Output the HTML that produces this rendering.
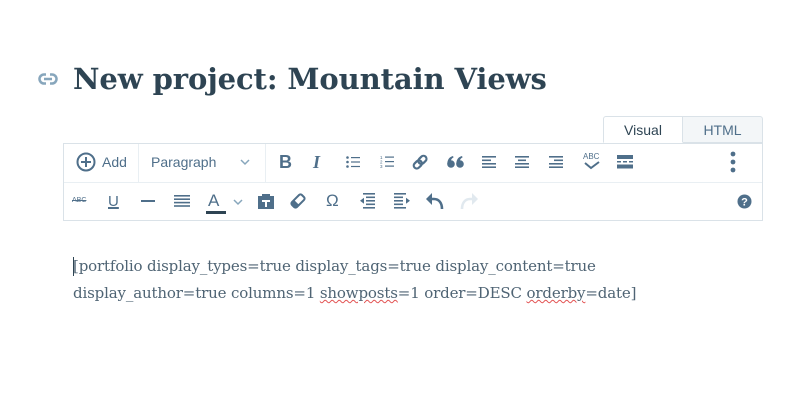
<!DOCTYPE html>
<html><head><style>
body{margin:0;width:806px;height:400px;background:#fff;position:relative;overflow:hidden;font-family:"Liberation Sans",sans-serif}
.a{position:absolute}
h1{position:absolute;left:73px;top:62px;margin:0;font:bold 29px "DejaVu Serif",serif;color:#2e4453;letter-spacing:-0.1px;white-space:nowrap}
.tab{position:absolute;top:116px;height:27px;box-sizing:border-box;border:1px solid #dae2e8;font-size:14px;color:#2e4453;text-align:center;line-height:26px}
.box{position:absolute;left:63px;top:143px;width:700px;height:78px;box-sizing:border-box;border:1px solid #dae2e8}
.ic{position:absolute;color:#4f6f8a}
svg{position:absolute;overflow:visible}
.txt{position:absolute;left:73px;top:253px;font:15px/27px "DejaVu Serif",serif;color:#4f6474;letter-spacing:-0.15px;white-space:nowrap}
.sp{text-decoration:underline wavy #e25252;text-decoration-thickness:1px}
</style></head><body>
<svg style="left:38px;top:73px" width="20" height="12" viewBox="0 0 20 12"><rect x="1.5" y="1.5" width="17" height="9" rx="4.5" fill="none" stroke="#87a6bc" stroke-width="2.5"/><line x1="6" y1="6" x2="14" y2="6" stroke="#87a6bc" stroke-width="2.5"/><rect x="8" y="0" width="4" height="3" fill="#fff"/><rect x="8" y="9" width="4" height="3" fill="#fff"/></svg>
<h1>New project: Mountain Views</h1>
<div class="tab" style="left:603px;width:80px;background:#fff;border-bottom-color:#fff;border-radius:3px 0 0 0;z-index:2">Visual</div>
<div class="tab" style="left:682px;width:81px;background:#f3f6f8;color:#4f6f8a;border-radius:0 3px 0 0">HTML</div>
<div class="box"></div>
<div class="a" style="left:64px;top:182px;width:698px;height:1px;background:#e9eff3"></div>
<div class="a" style="left:138px;top:144px;width:1px;height:38px;background:#e9eff3"></div>
<div class="a" style="left:265px;top:144px;width:1px;height:38px;background:#e9eff3"></div>
<svg style="left:76px;top:152px" width="20" height="20"><circle cx="10" cy="10" r="8.5" fill="none" stroke="#4f6f8a" stroke-width="2"/><path d="M10 5v10M5 10h10" stroke="#4f6f8a" stroke-width="2"/></svg>
<div class="ic" style="left:102px;top:154px;font-size:14px">Add</div>
<div class="ic" style="left:151px;top:154px;font-size:14px">Paragraph</div>
<svg style="left:240px;top:159px" width="10" height="6"><path d="M1 1l4 4 4-4" fill="none" stroke="#87a6bc" stroke-width="1.5"/></svg>
<div class="ic" style="left:279px;top:152px;font:bold 18px 'Liberation Sans'">B</div>
<div class="ic" style="left:313px;top:152px;font:italic bold 18px 'Liberation Serif'">I</div>
<svg style="left:346px;top:156px" width="14" height="12"><g fill="#4f6f8a"><circle cx="1.5" cy="1.5" r="1.3"/><circle cx="1.5" cy="6" r="1.3"/><circle cx="1.5" cy="10.5" r="1.3"/><rect x="5" y="1" width="9" height="1.2"/><rect x="5" y="5.4" width="9" height="1.2"/><rect x="5" y="9.9" width="9" height="1.2"/></g></svg>
<svg style="left:380px;top:155px" width="14" height="13"><g fill="#4f6f8a"><text x="0" y="4" font-size="4.5" font-family="Liberation Sans">1</text><text x="0" y="8.5" font-size="4.5" font-family="Liberation Sans">2</text><text x="0" y="13" font-size="4.5" font-family="Liberation Sans">3</text><rect x="5" y="1.5" width="9" height="1.2"/><rect x="5" y="6" width="9" height="1.2"/><rect x="5" y="10.5" width="9" height="1.2"/></g></svg>
<svg style="left:413px;top:154px" width="16" height="16"><g fill="none" stroke="#4f6f8a" stroke-width="2.2"><rect x="-2.5" y="4.5" width="9" height="6" rx="3" transform="rotate(-45 8 8) translate(2 -0)"/><rect x="7" y="4.5" width="9" height="6" rx="3" transform="rotate(-45 8 8) translate(-1 0)"/></g></svg>
<svg style="left:447px;top:156px" width="17" height="12"><g fill="#4f6f8a"><circle cx="4" cy="8" r="3.8"/><path d="M0.3 8C0.3 4 2 1 6 0l0.6 1.4C4 2.5 3.5 5 4 8z"/><circle cx="13" cy="8" r="3.8"/><path d="M9.3 8C9.3 4 11 1 15 0l0.6 1.4C13 2.5 12.5 5 13 8z"/></g></svg>
<svg style="left:482px;top:156px" width="14" height="12"><g fill="#4f6f8a"><rect width="14" height="1.6"/><rect y="3.5" width="9" height="1.6"/><rect y="7" width="14" height="1.6"/><rect y="10.4" width="14" height="1.6"/></g></svg>
<svg style="left:515px;top:156px" width="14" height="12"><g fill="#4f6f8a"><rect width="14" height="1.6"/><rect x="3" y="3.5" width="8" height="1.6"/><rect y="7" width="14" height="1.6"/><rect y="10.4" width="14" height="1.6"/></g></svg>
<svg style="left:549px;top:156px" width="14" height="12"><g fill="#4f6f8a"><rect width="14" height="1.6"/><rect x="5" y="3.5" width="9" height="1.6"/><rect y="7" width="14" height="1.6"/><rect y="10.4" width="14" height="1.6"/></g></svg>
<div class="ic" style="left:583px;top:152px;font-size:8px">ABC</div>
<svg style="left:584px;top:161px" width="16" height="9"><path d="M1 2l6 5 8-6" fill="none" stroke="#4f6f8a" stroke-width="2"/></svg>
<svg style="left:617px;top:155px" width="16" height="14"><g fill="#4f6f8a"><rect width="16" height="4"/><rect y="6" width="4" height="1.5"/><rect x="6" y="6" width="4" height="1.5"/><rect x="12" y="6" width="4" height="1.5"/><rect y="9.5" width="16" height="4"/></g></svg>
<svg style="left:729px;top:151px" width="8" height="22"><g fill="#4f6f8a"><circle cx="4" cy="3" r="2.4"/><circle cx="4" cy="11" r="2.4"/><circle cx="4" cy="19" r="2.4"/></g></svg>
<div class="ic" style="left:72px;top:197px;font-size:7px;text-decoration:line-through">ABC</div>
<div class="ic" style="left:108px;top:193px;font-size:15px;text-decoration:underline;text-decoration-thickness:2px">U</div>
<div class="a" style="left:141px;top:200px;width:14px;height:2px;background:#4f6f8a"></div>
<svg style="left:174px;top:195px" width="16" height="12"><g fill="#4f6f8a"><rect width="16" height="1.6"/><rect y="3.4" width="16" height="1.6"/><rect y="6.8" width="16" height="1.6"/><rect y="10.2" width="16" height="1.6"/></g></svg>
<div class="ic" style="left:208px;top:191px;font-size:17px">A</div>
<div class="a" style="left:206px;top:211px;width:20px;height:3px;background:#2e4453"></div>
<svg style="left:233px;top:199px" width="10" height="6"><path d="M1 1l4 4 4-4" fill="none" stroke="#87a6bc" stroke-width="1.5"/></svg>
<svg style="left:258px;top:193px" width="16" height="16"><path d="M0 3h4V1h8v2h4v13H0z" fill="#4f6f8a"/><path d="M4 7h8v2H9v5H7V9H4z" fill="#fff"/></svg>
<svg style="left:290px;top:193px" width="16" height="16"><g transform="rotate(-45 8 8)"><rect x="1" y="4.5" width="14" height="7" rx="2" fill="none" stroke="#4f6f8a" stroke-width="2"/><rect x="1" y="4.5" width="5" height="7" fill="#4f6f8a"/></g></svg>
<div class="ic" style="left:326px;top:191px;font-size:17px">Ω</div>
<svg style="left:360px;top:193px" width="16" height="16"><g fill="#4f6f8a"><rect x="3" width="12" height="1.6"/><rect x="6" y="3.5" width="9" height="1.6"/><rect x="6" y="7" width="9" height="1.6"/><rect x="6" y="10.5" width="9" height="1.6"/><rect x="3" y="14" width="12" height="1.6"/><path d="M0 7.8l4-3v6z"/></g></svg>
<svg style="left:394px;top:193px" width="16" height="16"><g fill="#4f6f8a"><rect width="12" height="1.6"/><rect y="3.5" width="9" height="1.6"/><rect y="7" width="9" height="1.6"/><rect y="10.5" width="9" height="1.6"/><rect y="14" width="12" height="1.6"/><path d="M16 7.8l-4-3v6z"/></g></svg>
<svg style="left:426px;top:193px" width="18" height="17"><path d="M2 6h6c5 0 8 4 8 10" fill="none" stroke="#4f6f8a" stroke-width="2.6"/><path d="M0 6l6-6v12z" fill="#4f6f8a"/></svg>
<svg style="left:460px;top:193px" width="18" height="17"><path d="M16 6h-6c-5 0-8 4-8 10" fill="none" stroke="#e1e9ef" stroke-width="2.6"/><path d="M18 6l-6-6v12z" fill="#e1e9ef"/></svg>
<svg style="left:737px;top:194px" width="15" height="15"><circle cx="7.5" cy="7.5" r="7" fill="#4f6f8a"/><text x="7.5" y="11.5" text-anchor="middle" font-size="11" font-weight="bold" fill="#fff" font-family="Liberation Sans">?</text></svg>
<div class="a" style="left:73px;top:257px;width:1px;height:19px;background:#2e4453"></div>
<div class="txt">[portfolio display_types=true display_tags=true display_content=true<br>display_author=true columns=1 <span class="sp">showposts</span>=1 order=DESC <span class="sp">orderby</span>=date]</div>
</body></html>
